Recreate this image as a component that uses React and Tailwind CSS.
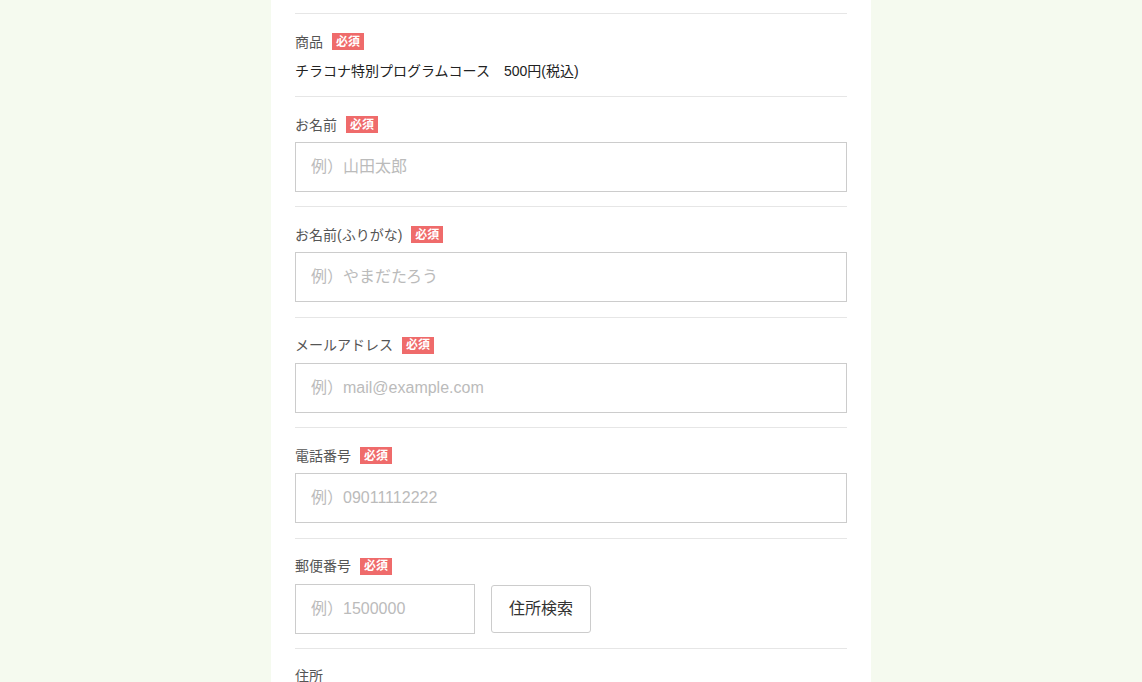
const font = { fontFamily: '"Liberation Sans", "Noto Sans CJK JP", sans-serif' };

function Badge() {
  return (
    <span className="ml-[9px] inline-flex h-[17px] w-[32px] items-center justify-center bg-[#ef6b6b] text-[12px] font-bold leading-none text-white">
      必須
    </span>
  );
}

function Label({ children, required = true }) {
  return (
    <div className="flex h-[17px] items-center text-[14px] leading-none text-[#555]">
      <span>{children}</span>
      {required && <Badge />}
    </div>
  );
}

function Field({ label, placeholder }) {
  return (
    <div className="border-t border-[#e6e6e6] pt-[19px] pb-[14.4px]">
      <Label>{label}</Label>
      <input
        type="text"
        placeholder={placeholder}
        className="mt-[9px] block h-[50px] w-full border border-[#cccccc] bg-white px-[15px] text-[16px] text-[#333] placeholder:text-[#bbbbbb] focus:outline-none"
      />
    </div>
  );
}

export default function App() {
  return (
    <div className="h-screen overflow-hidden bg-[#f5faef]" style={font}>
      <div className="mx-auto h-full w-[600px] bg-white px-[24px] pt-[13px]">
        <div className="border-t border-[#e6e6e6] pt-[19px] pb-[15px]">
          <Label>商品</Label>
          <p className="mt-[11px] text-[14px] leading-[20px] text-[#222]">
            チラコナ特別プログラムコース　500円(税込)
          </p>
        </div>
        <Field label="お名前" placeholder="例）山田太郎" />
        <Field label="お名前(ふりがな)" placeholder="例）やまだたろう" />
        <Field label="メールアドレス" placeholder="例）mail@example.com" />
        <Field label="電話番号" placeholder="例）09011112222" />
        <div className="border-t border-[#e6e6e6] pt-[19px] pb-[14.4px]">
          <Label>郵便番号</Label>
          <div className="mt-[9px] flex items-center gap-[16px]">
            <input
              type="text"
              placeholder="例）1500000"
              className="block h-[50px] w-[180px] border border-[#cccccc] bg-white px-[15px] text-[16px] text-[#333] placeholder:text-[#bbbbbb] focus:outline-none"
            />
            <button className="h-[48px] w-[100px] rounded-[3px] border border-[#cccccc] bg-white text-[16px] text-[#333]">
              住所検索
            </button>
          </div>
        </div>
        <div className="border-t border-[#e6e6e6] pt-[19px] pb-[15px]">
          <Label required={false}>住所</Label>
        </div>
      </div>
    </div>
  );
}
